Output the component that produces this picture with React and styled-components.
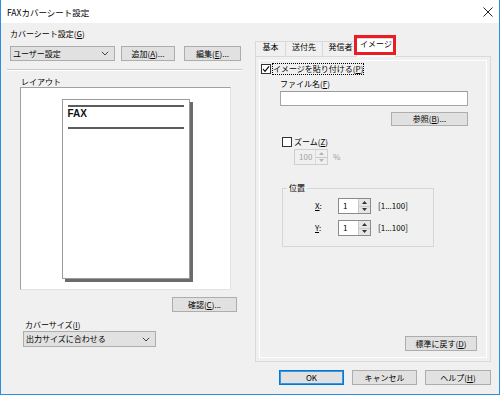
import React from "react";
import styled, { createGlobalStyle, css } from "styled-components";

const FONT = `"Noto Sans CJK JP", "Noto Sans", sans-serif`;

const Global = createGlobalStyle`
  html, body { margin: 0; padding: 0; background: #ffffff; }
  body { font-family: ${FONT}; }
  * { box-sizing: border-box; }
`;

const Window = styled.div`
  width: 500px;
  height: 395px;
  border: 1px solid #2b8ee0;
  border-top: none;
  display: flex;
  flex-direction: column;
  font-family: ${FONT};
  font-size: 8px;
  color: #000;
  background: #f0f0f0;
`;

const TitleBar = styled.div`
  height: 23px;
  background: #ffffff;
  display: flex;
  align-items: center;
  justify-content: space-between;
  padding: 0 6px 0 6px;
  font-size: 8.5px;
  line-height: 10px;
`;

const Body = styled.div`
  flex: 1;
  display: flex;
  flex-direction: column;
  padding: 0 8px 9px 9px;
`;

const Main = styled.div`
  height: 339px;
  display: grid;
  grid-template-columns: 232px 236px;
  column-gap: 13px;
`;

const LeftCol = styled.div`
  display: flex;
  flex-direction: column;
  align-items: flex-start;
  padding-top: 6px;
`;

const RightCol = styled.div`
  display: flex;
  flex-direction: column;
  padding-top: 18px;
`;

const Label = styled.div`
  line-height: 10px;
  height: 10px;
  white-space: nowrap;
  margin-left: ${(p) => p.$ml || 0}px;
  margin-top: ${(p) => p.$mt || 0}px;
  color: ${(p) => (p.$disabled ? "#a0a0a0" : "#000")};
`;

const U = styled.span`
  text-decoration: underline;
  text-underline-offset: 1px;
`;

const Row = styled.div`
  display: flex;
  align-items: center;
  margin-top: ${(p) => p.$mt || 0}px;
  margin-left: ${(p) => p.$ml || 0}px;
`;

const Button = styled.button`
  width: ${(p) => p.$w}px;
  height: ${(p) => p.$h || 15}px;
  margin-left: ${(p) => p.$ml || 0}px;
  margin-top: ${(p) => p.$mt || 0}px;
  padding: 0;
  background: #e1e1e1;
  border: 1px solid #adadad;
  font-family: ${FONT};
  font-size: 8px;
  line-height: 10px;
  color: #000;
  display: flex;
  align-items: center;
  justify-content: center;
  white-space: nowrap;
  ${(p) =>
    p.$default &&
    css`
      border-color: #0078d7;
      box-shadow: inset 0 0 0 1px #3d95dc;
    `}
`;

const Combo = styled.div`
  width: ${(p) => p.$w}px;
  height: ${(p) => p.$h || 15}px;
  margin-left: ${(p) => p.$ml || 0}px;
  margin-top: ${(p) => p.$mt || 0}px;
  background: #e1e1e1;
  border: 1px solid #adadad;
  display: flex;
  align-items: center;
  justify-content: space-between;
  padding: 0 5px 0 2px;
  line-height: 10px;
  white-space: nowrap;
`;

const Separator = styled.div`
  width: 235px;
  margin-left: -3px;
  margin-top: 8px;
  height: 2px;
  border-top: 1px solid #c9c9c9;
  border-bottom: 1px solid #ffffff;
`;

const Preview = styled.div`
  margin-left: 10px;
  width: 211px;
  height: 203px;
  background: #ffffff;
  border-top: 1px solid #a0a0a0;
  border-left: 1px solid #a0a0a0;
  border-right: 1px solid #e3e3e3;
  border-bottom: 1px solid #e3e3e3;
  display: flex;
  justify-content: center;
  padding-top: 11px;
`;

const Sheet = styled.div`
  width: 128px;
  height: 180px;
  background: #ffffff;
  border: 1px solid #9a9a9a;
  box-shadow: 3px 3px 0 #6b6b6b;
  padding: 5px 5px 0 5px;
  display: flex;
  flex-direction: column;
`;

const Rule = styled.div`
  height: 2px;
  background: #5c5c5c;
  margin-top: ${(p) => p.$mt || 0}px;
`;

const FaxText = styled.div`
  font-family: "Liberation Sans", Arial, sans-serif;
  font-weight: bold;
  font-size: 10px;
  line-height: 11px;
  margin-top: 1px;
  color: #111;
`;

const TabRow = styled.div`
  display: flex;
  align-items: flex-end;
  height: 15px;
  position: relative;
  z-index: 1;
`;

const Tab = styled.div`
  width: ${(p) => p.$w}px;
  height: 15px;
  margin-right: -1px;
  border: 1px solid #d9d9d9;
  border-bottom: none;
  background: #f0f0f0;
  display: flex;
  justify-content: center;
  line-height: 10px;
  white-space: nowrap;
  position: relative;
  ${(p) =>
    p.$active &&
    css`
      height: 19px;
      margin-left: -2px;
      margin-bottom: -1px;
      background: #ffffff;
      z-index: 2;
    `}
`;

const Highlight = styled.div`
  position: absolute;
  top: -4px;
  left: -3px;
  right: -1px;
  bottom: 2px;
  border: 3px solid #ec1c24;
  pointer-events: none;
`;

const Panel = styled.div`
  flex: 1;
  border: 1px solid #d9d9d9;
  padding: 3px;
  display: flex;
`;

const PanelInner = styled.div`
  flex: 1;
  border: 1px solid #ffffff;
  display: flex;
  flex-direction: column;
  align-items: flex-start;
`;

const CheckBox = styled.span`
  width: 10px;
  height: 10px;
  border: 1px solid #333333;
  background: #ffffff;
  display: inline-flex;
  align-items: center;
  justify-content: center;
  flex-shrink: 0;
`;

const CheckText = styled.span`
  margin-left: 2px;
  line-height: 10px;
  white-space: nowrap;
  ${(p) =>
    p.$focus &&
    css`
      outline: 1px dotted #000;
      outline-offset: 0;
    `}
`;

const TextInput = styled.div`
  width: ${(p) => p.$w}px;
  height: 15px;
  margin-left: ${(p) => p.$ml || 0}px;
  margin-top: ${(p) => p.$mt || 0}px;
  background: #ffffff;
  border: 1px solid #a5a5a5;
  border-top-color: #9a9a9a;
`;

const Spinner = styled.div`
  width: ${(p) => p.$w}px;
  height: 16px;
  display: flex;
  border: 1px solid ${(p) => (p.$disabled ? "#cfcfcf" : "#8a8a8a")};
  background: ${(p) => (p.$disabled ? "#f0f0f0" : "#ffffff")};
`;

const SpinValue = styled.div`
  flex: 1;
  padding-left: 4px;
  line-height: 14px;
  color: ${(p) => (p.$disabled ? "#a0a0a0" : "#000")};
`;

const SpinButtons = styled.div`
  width: 12px;
  display: flex;
  flex-direction: column;
  border-left: 1px solid ${(p) => (p.$disabled ? "#dadada" : "#c8c8c8")};
`;

const SpinHalf = styled.div`
  flex: 1;
  background: ${(p) => (p.$disabled ? "#f0f0f0" : "#e6e6e6")};
  display: flex;
  align-items: center;
  justify-content: center;
  & + & {
    border-top: 1px solid ${(p) => (p.$disabled ? "#dadada" : "#c8c8c8")};
  }
`;

const Group = styled.fieldset`
  margin: 18px 0 0 22px;
  width: 152px;
  height: 64px;
  padding: 0 0 10px 0;
  border: 1px solid #d6d6d6;
  min-width: 0;
`;

const Legend = styled.legend`
  margin-left: 4px;
  padding: 0 2px;
  line-height: 10px;
  font-size: 8px;
`;

const FieldRow = styled.div`
  display: flex;
  align-items: center;
  height: 16px;
  margin-top: ${(p) => p.$mt}px;
`;

const FieldLabel = styled.div`
  margin-left: 32px;
  width: 23px;
  line-height: 10px;
`;

const Range = styled.div`
  margin-left: 7px;
  line-height: 10px;
  white-space: nowrap;
`;

const Unit = styled.div`
  margin-left: 5px;
  color: #a0a0a0;
  line-height: 10px;
`;

const ResetButton = styled(Button)`
  margin-top: auto;
  align-self: flex-end;
  margin-right: 9px;
  margin-bottom: 6px;
`;

const Footer = styled.div`
  display: flex;
  justify-content: flex-end;
  gap: 8px;
  margin-top: 8px;
`;

const Chevron = () => (
  <svg width="8" height="5" viewBox="0 0 8 5">
    <path d="M0.8 0.8 L4 4 L7.2 0.8" fill="none" stroke="#444" strokeWidth="1" />
  </svg>
);

const Check = () => (
  <svg width="8" height="8" viewBox="0 0 8 8">
    <path d="M1 4 L3 6.3 L7 1.3" fill="none" stroke="#000" strokeWidth="1.1" />
  </svg>
);

const Arrow = ({ up, color }) => (
  <svg width="5" height="3" viewBox="0 0 5 3">
    <path d={up ? "M0 3 L2.5 0 L5 3 Z" : "M0 0 L2.5 3 L5 0 Z"} fill={color} />
  </svg>
);

const SpinBox = ({ value, width, disabled }) => {
  const c = disabled ? "#b5b5b5" : "#333";
  return (
    <Spinner $w={width} $disabled={disabled}>
      <SpinValue $disabled={disabled}>{value}</SpinValue>
      <SpinButtons $disabled={disabled}>
        <SpinHalf $disabled={disabled}>
          <Arrow up color={c} />
        </SpinHalf>
        <SpinHalf $disabled={disabled}>
          <Arrow color={c} />
        </SpinHalf>
      </SpinButtons>
    </Spinner>
  );
};

const CloseIcon = () => (
  <svg width="10" height="10" viewBox="0 0 10 10">
    <path d="M0.5 0.5 L9.5 9.5 M9.5 0.5 L0.5 9.5" stroke="#222" strokeWidth="1" />
  </svg>
);

export default function App() {
  return (
    <>
      <Global />
      <Window>
        <TitleBar>
          <span>FAXカバーシート設定</span>
          <CloseIcon />
        </TitleBar>
        <Body>
          <Main>
            <LeftCol>
              <Label>
                カバーシート設定(<U>G</U>)
              </Label>
              <Row $mt={7}>
                <Combo $w={105}>
                  <span>ユーザー設定</span>
                  <Chevron />
                </Combo>
                <Button $w={54} $ml={6}>
                  追加(<U>A</U>)...
                </Button>
                <Button $w={57} $ml={9}>
                  編集(<U>E</U>)...
                </Button>
              </Row>
              <Separator />
              <Label $mt={6} $ml={11}>
                レイアウト
              </Label>
              <Preview>
                <Sheet>
                  <Rule />
                  <FaxText>FAX</FaxText>
                  <Rule $mt={8} />
                </Sheet>
              </Preview>
              <Button $w={65} $ml={162} $mt={7}>
                確認(<U>C</U>)...
              </Button>
              <Label $mt={8} $ml={15}>
                カバーサイズ(<U>I</U>)
              </Label>
              <Combo $w={133} $h={16} $ml={13} $mt={1}>
                <span>出力サイズに合わせる</span>
                <Chevron />
              </Combo>
            </LeftCol>
            <RightCol>
              <TabRow>
                <Tab $w={31}>基本</Tab>
                <Tab $w={38}>送付先</Tab>
                <Tab $w={37}>発信者</Tab>
                <Tab $w={40} $active>
                  イメージ
                  <Highlight />
                </Tab>
              </TabRow>
              <Panel>
                <PanelInner>
                  <Row $mt={3} $ml={1}>
                    <CheckBox>
                      <Check />
                    </CheckBox>
                    <CheckText $focus>
                      イメージを貼り付ける(<U>P</U>)
                    </CheckText>
                  </Row>
                  <Label $mt={5} $ml={20}>
                    ファイル名(<U>F</U>)
                  </Label>
                  <TextInput $w={188} $ml={20} $mt={2} />
                  <Button $w={77} $h={14} $ml={131} $mt={6}>
                    参照(<U>B</U>)...
                  </Button>
                  <Row $mt={11} $ml={22}>
                    <CheckBox />
                    <CheckText>
                      ズーム(<U>Z</U>)
                    </CheckText>
                  </Row>
                  <Row $mt={2} $ml={34}>
                    <SpinBox value="100" width={34} disabled />
                    <Unit>%</Unit>
                  </Row>
                  <Group>
                    <Legend>位置</Legend>
                    <FieldRow $mt={5}>
                      <FieldLabel>
                        <U>X</U>:
                      </FieldLabel>
                      <SpinBox value="1" width={33} />
                      <Range>[1...100]</Range>
                    </FieldRow>
                    <FieldRow $mt={6}>
                      <FieldLabel>
                        <U>Y</U>:
                      </FieldLabel>
                      <SpinBox value="1" width={33} />
                      <Range>[1...100]</Range>
                    </FieldRow>
                  </Group>
                  <ResetButton $w={72} $h={15}>
                    標準に戻す(<U>D</U>)
                  </ResetButton>
                </PanelInner>
              </Panel>
            </RightCol>
          </Main>
          <Footer>
            <Button $w={65} $default>
              OK
            </Button>
            <Button $w={65}>キャンセル</Button>
            <Button $w={66}>
              ヘルプ(<U>H</U>)
            </Button>
          </Footer>
        </Body>
      </Window>
    </>
  );
}
